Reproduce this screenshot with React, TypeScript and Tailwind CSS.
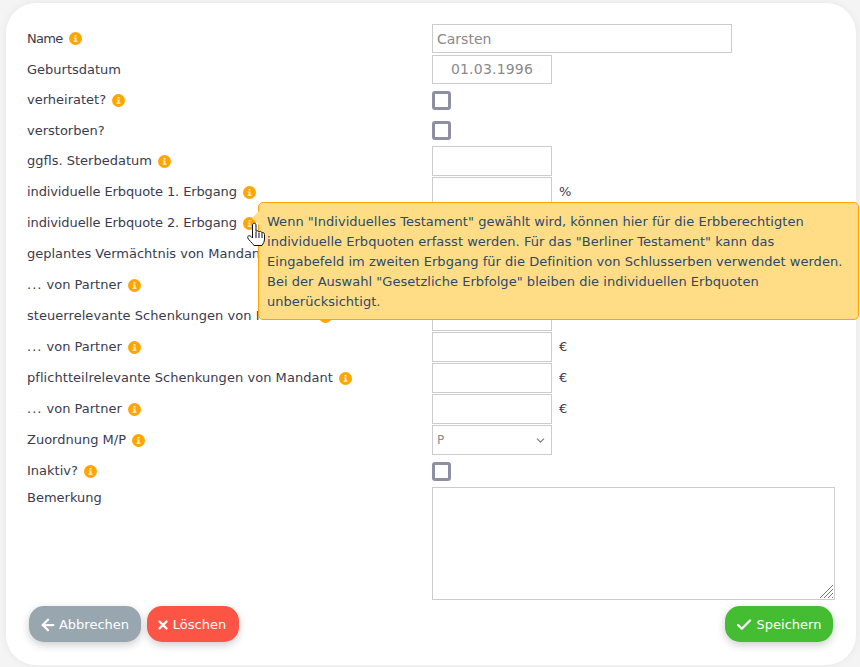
import { ArrowLeft, Check, ChevronDown, X } from "lucide-react";

const font = "font-['DejaVu_Sans',sans-serif]";

function Info() {
  return (
    <span className="ml-[6px] inline-flex h-[13px] w-[13px] shrink-0 items-center justify-center rounded-full bg-[#ffa500]">
      <svg width="5" height="7" viewBox="0 0 5 7" fill="#ffe9bf">
        <rect x="1.5" y="0" width="2" height="1.6" />
        <path d="M0.8 2.4h2.7v3.2h0.9V7H0.6V5.6h1V3.6H0.8z" />
      </svg>
    </span>
  );
}

function Label({ text, info = true, tracking = "" }: { text: React.ReactNode; info?: boolean; tracking?: string }) {
  return (
    <div className="flex w-[405px] shrink-0 items-center whitespace-nowrap">
      <span className={tracking}>{text}</span>
      {info && <Info />}
    </div>
  );
}

function Checkbox() {
  return <span className="block h-[19px] w-[19px] rounded-[3px] border-[3px] border-[#8f8fa3] bg-white" />;
}

function Row({
  text,
  info = true,
  tracking = "",
  children,
}: {
  text: React.ReactNode;
  info?: boolean;
  tracking?: string;
  children?: React.ReactNode;
}) {
  return (
    <div className="mb-px flex h-[30px] items-center">
      <Label text={text} info={info} tracking={tracking} />
      {children}
    </div>
  );
}

function Amount({ unit }: { unit: string }) {
  return (
    <>
      <div className="h-[30px] w-[120px] border border-[#cccccc] bg-white" />
      <span className="ml-[7px]">{unit}</span>
    </>
  );
}

function Partner() {
  return (
    <>
      <span className="tracking-[1px]">...</span> von Partner
    </>
  );
}

export default function App() {
  return (
    <div className={`h-[667px] w-[860px] overflow-hidden bg-[#f4f4f4] pt-[3px] pl-[6px] text-[13px] text-[#3b3b4f] ${font}`}>
      <div className="relative h-[662px] w-[850px] rounded-[30px] bg-white pt-[21px] pl-[21px] shadow-[0_0_8px_rgba(0,0,0,0.06)]">
        <div className="mb-[2px] flex h-[29px] items-center">
          <Label text="Name" tracking="tracking-[-0.7px]" />
          <div className="flex h-[29px] w-[300px] items-center border border-[#cccccc] px-[4px] pt-[1px] text-[14px] text-[#8a8a8a]">Carsten</div>
        </div>
        <div className="mb-px flex h-[29px] items-center">
          <Label text="Geburtsdatum" info={false} />
          <div className="flex h-[29px] w-[120px] items-center justify-center border border-[#cccccc] text-[14px] tracking-[0.2px] text-[#8a8a8a]">01.03.1996</div>
        </div>
        <Row text="verheiratet?"><Checkbox /></Row>
        <div className="mb-px flex h-[29px] items-center">
          <Label text="verstorben?" info={false} />
          <Checkbox />
        </div>
        <Row text="ggfls. Sterbedatum">
          <div className="h-[30px] w-[120px] border border-[#cccccc]" />
        </Row>
        <Row text="individuelle Erbquote 1. Erbgang" tracking="tracking-[-0.11px]"><Amount unit="%" /></Row>
        <Row text="individuelle Erbquote 2. Erbgang" tracking="tracking-[-0.11px]"><Amount unit="%" /></Row>
        <Row text="geplantes Vermächtnis von Mandant"><Amount unit="€" /></Row>
        <Row text={<Partner />}><Amount unit="€" /></Row>
        <Row text="steuerrelevante Schenkungen von Mandant" tracking="tracking-[0.05px]"><Amount unit="€" /></Row>
        <Row text={<Partner />}><Amount unit="€" /></Row>
        <Row text="pflichtteilrelevante Schenkungen von Mandant" tracking="tracking-[0.05px]"><Amount unit="€" /></Row>
        <Row text={<Partner />}><Amount unit="€" /></Row>
        <Row text="Zuordnung M/P">
          <div className="flex h-[30px] w-[120px] items-center justify-between border border-[#cccccc] pr-[4px] pl-[4px] text-[12px] text-[#8a8a8a]">
            P
            <ChevronDown size={13} strokeWidth={2} className="text-[#777777]" />
          </div>
        </Row>
        <Row text="Inaktiv?"><Checkbox /></Row>
        <div className="flex h-[113px] items-start">
          <div className="w-[405px] pt-[1px]">Bemerkung</div>
          <div className="relative h-[113px] w-[403px] border border-[#cccccc]">
            <svg className="absolute right-0 bottom-0" width="15" height="15" viewBox="0 0 15 15" stroke="#777777" strokeWidth="1">
              <path d="M1 14L14 1M5 14L14 5M9 14L14 9M13 14L14 13" />
            </svg>
          </div>
        </div>
        <div className="mt-[6px] flex w-[806px] items-center pl-[2px]">
          <button className="flex h-[36px] w-[112px] items-center justify-center gap-[4px] rounded-[15px] bg-[#98a6b0] pt-[1px] text-white shadow-[0_3px_8px_rgba(0,0,0,0.2)]">
            <ArrowLeft size={18} strokeWidth={3} className="-mx-[2px]" />
            Abbrechen
          </button>
          <button className="ml-[6px] flex h-[36px] w-[92px] items-center justify-center gap-[3px] rounded-[15px] bg-[#fc5545] pt-[1px] pr-[4px] text-white shadow-[0_3px_8px_rgba(0,0,0,0.2)]">
            <X size={14} strokeWidth={4} />
            Löschen
          </button>
          <button className="ml-auto flex h-[36px] w-[108px] items-center justify-center gap-[5px] rounded-[15px] bg-[#44bd32] pt-[1px] text-white shadow-[0_3px_8px_rgba(0,0,0,0.2)]">
            <Check size={18} strokeWidth={3} className="-mx-[1.5px]" />
            Speichern
          </button>
        </div>

        <div className="absolute top-[199px] left-[252px] z-10 h-[118px] w-[601px] rounded-[5px] border border-[#ffa500] bg-[#ffdd87] pt-[9px] pl-[8px] leading-[20px] tracking-[0.03px] text-[#2c4a6e]">
          <span className="absolute top-[8px] -left-[7px] h-0 w-0 border-y-[7px] border-r-[7px] border-y-transparent border-r-[#ffdd87]" />
          Wenn "Individuelles Testament" gewählt wird, können hier für die Erbberechtigten
          <br />
          individuelle Erbquoten erfasst werden. Für das "Berliner Testament" kann das
          <br />
          Eingabefeld im zweiten Erbgang für die Definition von Schlusserben verwendet werden.
          <br />
          Bei der Auswahl "Gesetzliche Erbfolge" bleiben die individuellen Erbquoten
          <br />
          unberücksichtigt.
        </div>
        <svg className="absolute top-[219px] left-[241px] z-20" width="19" height="25" viewBox="0 0 19 25">
          <path
            d="M5.5 3C5.500.8 9 .8 9 3V9.500C9.500 8.500 11.500 8.500 12 10C12.500 9 14.500 9 15 10.800C15.500 10.300 17.500 10.500 17.500 12.500V17C17.500 20 16 21.500 15 23.500H7C5 20.500 2 18.500 .8 16C0 14 2.500 13 4 14.500L5.500 16Z"
            fill="#ffffff"
            stroke="#111111"
            strokeWidth="1"
          />
          <path d="M9 10V16M12 10.500V16M15 11V16" stroke="#111111" strokeWidth="1" fill="none" />
        </svg>
      </div>
    </div>
  );
}
